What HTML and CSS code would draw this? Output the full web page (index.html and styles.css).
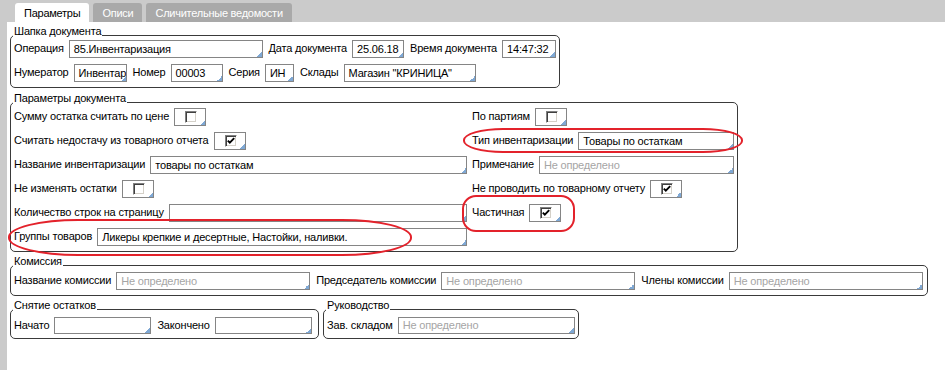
FILE: index.html
```html
<!DOCTYPE html>
<html lang="ru">
<head>
    <meta charset="UTF-8">
    <title>Инвентаризация</title>
    <link rel="stylesheet" href="styles.css">
</head>
<body>
    <div class="tabs">
        <div class="tab active">Параметры</div>
        <div class="tab">Описи</div>
        <div class="tab">Сличительные ведомости</div>
    </div>

    <div class="panel">
        <!-- Шапка документа -->
        <fieldset class="group g-head">
            <legend>Шапка документа</legend>
            <div class="rows">
                <div class="row">
                    <span class="lbl">Операция</span>
                    <span class="fld w-op">85.Инвентаризация</span>
                    <span class="lbl">Дата документа</span>
                    <span class="fld w-date">25.06.18</span>
                    <span class="lbl">Время документа</span>
                    <span class="fld w-time">14:47:32</span>
                </div>
                <div class="row">
                    <span class="lbl">Нумератор</span>
                    <span class="fld w-num clip">Инвентар</span>
                    <span class="lbl">Номер</span>
                    <span class="fld w-no">00003</span>
                    <span class="lbl">Серия</span>
                    <span class="fld w-ser">ИН</span>
                    <span class="lbl">Склады</span>
                    <span class="fld w-store">Магазин "КРИНИЦА"</span>
                </div>
            </div>
        </fieldset>

        <!-- Параметры документа -->
        <fieldset class="group g-params">
            <legend>Параметры документа</legend>
            <div class="params">
                <div class="rows">
                    <div class="row">
                        <span class="lbl">Сумму остатка считать по цене</span>
                        <span class="fld cbox"><span class="chk"></span></span>
                    </div>
                    <div class="row">
                        <span class="lbl">Считать недостачу из товарного отчета</span>
                        <span class="fld cbox"><span class="chk on"><svg width="8" height="8" viewBox="0 0 8 8"><polyline points="0.8,3.6 2.8,5.6 7.2,1.2" fill="none" stroke="#000" stroke-width="1.9"/></svg></span></span>
                    </div>
                    <div class="row">
                        <span class="lbl">Название инвентаризации</span>
                        <span class="fld grow">товары по остаткам</span>
                    </div>
                    <div class="row">
                        <span class="lbl">Не изменять остатки</span>
                        <span class="fld cbox"><span class="chk"></span></span>
                    </div>
                    <div class="row">
                        <span class="lbl">Количество строк на страницу</span>
                        <span class="fld grow"></span>
                    </div>
                    <div class="row">
                        <span class="lbl">Группы товаров</span>
                        <span class="fld grow">Ликеры крепкие и десертные, Настойки, наливки.</span>
                    </div>
                </div>
                <div class="rows">
                    <div class="row">
                        <span class="lbl">По партиям</span>
                        <span class="fld cbox"><span class="chk"></span></span>
                    </div>
                    <div class="row">
                        <span class="lbl">Тип инвентаризации</span>
                        <span class="fld grow">Товары по остаткам</span>
                    </div>
                    <div class="row">
                        <span class="lbl">Примечание</span>
                        <span class="fld grow empty">Не определено</span>
                    </div>
                    <div class="row">
                        <span class="lbl">Не проводить по товарному отчету</span>
                        <span class="fld cbox"><span class="chk on"><svg width="8" height="8" viewBox="0 0 8 8"><polyline points="0.8,3.6 2.8,5.6 7.2,1.2" fill="none" stroke="#000" stroke-width="1.9"/></svg></span></span>
                    </div>
                    <div class="row">
                        <span class="lbl">Частичная</span>
                        <span class="fld cbox"><span class="chk on"><svg width="8" height="8" viewBox="0 0 8 8"><polyline points="0.8,3.6 2.8,5.6 7.2,1.2" fill="none" stroke="#000" stroke-width="1.9"/></svg></span></span>
                    </div>
                </div>
            </div>
        </fieldset>

        <!-- Комиссия -->
        <fieldset class="group g-comm">
            <legend>Комиссия</legend>
            <div class="row">
                <span class="lbl">Название комиссии</span>
                <span class="fld w-comm empty">Не определено</span>
                <span class="lbl">Председатель комиссии</span>
                <span class="fld w-comm empty">Не определено</span>
                <span class="lbl">Члены комиссии</span>
                <span class="fld w-comm empty">Не определено</span>
            </div>
        </fieldset>

        <div class="bottom">
            <!-- Снятие остатков -->
            <fieldset class="group g-rest">
                <legend>Снятие остатков</legend>
                <div class="row">
                    <span class="lbl">Начато</span>
                    <span class="fld w-time2"></span>
                    <span class="lbl">Закончено</span>
                    <span class="fld w-time2"></span>
                </div>
            </fieldset>

            <!-- Руководство -->
            <fieldset class="group g-boss">
                <legend>Руководство</legend>
                <div class="row">
                    <span class="lbl">Зав. складом</span>
                    <span class="fld grow empty">Не определено</span>
                </div>
            </fieldset>
        </div>

        <!-- пометки красным -->
        <div class="mark mark-type"></div>
        <div class="mark mark-groups"></div>
        <div class="mark mark-part"></div>
    </div>
</body>
</html>
```

FILE: styles.css
```css
body {
    margin: 0;
    background: #cbcbcb;
    font-family: "Liberation Sans", Arial, sans-serif;
    font-size: 11px;
    letter-spacing: -0.18px;
    color: #000;
    height: 370px;
    overflow: hidden;
}
.tabs {
    display: flex;
    gap: 4px;
    height: 19px;
    padding: 3px 0 0 15px;
}
.tab {
    padding: 0 9px;
    line-height: 20px;
    background: #a9a9a9;
    color: #fff;
    border-radius: 3px 3px 0 0;
    letter-spacing: -0.25px;
}
.tab.active {
    background: #fff;
    color: #000;
}
.panel {
    position: relative;
    margin-left: 7px;
    height: 348px;
    padding: 8px 0 0 3px;
    box-sizing: border-box;
    background: #fff;
}
.group {
    margin: 0;
    padding: 0 3px 5px;
    border: 1px solid #3a3a3a;
    border-radius: 5px;
    box-sizing: border-box;
    min-width: 0;
}
.group legend {
    margin-left: -1px;
    padding: 0 1px;
    line-height: 10px;
    transform: translateY(-4px);
}
.g-head { width: 550px; }
.g-params {
    width: 728px;
    margin-top: 9px;
    padding-top: 1px;
}
.g-comm {
    width: 918px;
    margin-top: 8px;
    padding-top: 2px;
}
.bottom {
    display: flex;
    gap: 4px;
    margin-top: 8px;
}
.g-rest {
    width: 309px;
    padding-top: 3px;
    padding-bottom: 4px;
}
.g-boss {
    width: 256px;
    padding-top: 3px;
    padding-bottom: 4px;
}
.rows {
    display: flex;
    flex-direction: column;
    gap: 6px;
}
.row {
    display: flex;
    align-items: center;
    gap: 5px;
    height: 18px;
}
.bottom .row { height: 17px; }
.lbl {
    white-space: nowrap;
    margin-top: -2px;
}
.fld + .lbl { margin-left: 1px; }
.fld {
    display: block;
    height: 100%;
    box-sizing: border-box;
    padding: 0 4px;
    border: 1px solid #858585;
    line-height: 16px;
    white-space: nowrap;
    overflow: hidden;
    background: linear-gradient(135deg, transparent 50%, #7fa8d4 50%) right bottom / 5px 5px no-repeat, #fff;
}
.bottom .fld { line-height: 15px; }
.fld.empty { color: #a5a5a5; }
.fld.clip { padding-right: 0; }
.grow { flex: 1; }
.w-op { width: 194px; }
.w-date { width: 52px; }
.w-time { width: 54px; }
.w-num { width: 53px; }
.w-no { width: 52px; }
.w-ser { width: 29px; }
.w-store { width: 132px; }
.w-comm { width: 194px; }
.w-time2 { width: 97px; }
.params {
    display: grid;
    grid-template-columns: 453px 1fr;
    column-gap: 5px;
}
.cbox {
    display: flex;
    align-items: center;
    width: 32px;
    padding: 0 0 0 10px;
}
.chk {
    display: flex;
    align-items: center;
    justify-content: center;
    width: 12px;
    height: 12px;
    box-sizing: border-box;
    border: 1px solid;
    border-color: #808080 #fff #fff #808080;
    box-shadow: inset 1px 1px #404040, inset -1px -1px #d4d0c8;
    background: #fff;
}
.chk svg { display: block; }
.mark {
    position: absolute;
    box-sizing: border-box;
    border: 2px solid #e3222b;
}
.mark-type {
    left: 456px;
    top: 106px;
    width: 280px;
    height: 25px;
    border-radius: 40px / 12px;
}
.mark-groups {
    left: 1px;
    top: 197px;
    width: 404px;
    height: 37px;
    border-radius: 70px / 18px;
}
.mark-part {
    left: 455px;
    top: 173px;
    width: 113px;
    height: 37px;
    border-radius: 14px;
}
```
